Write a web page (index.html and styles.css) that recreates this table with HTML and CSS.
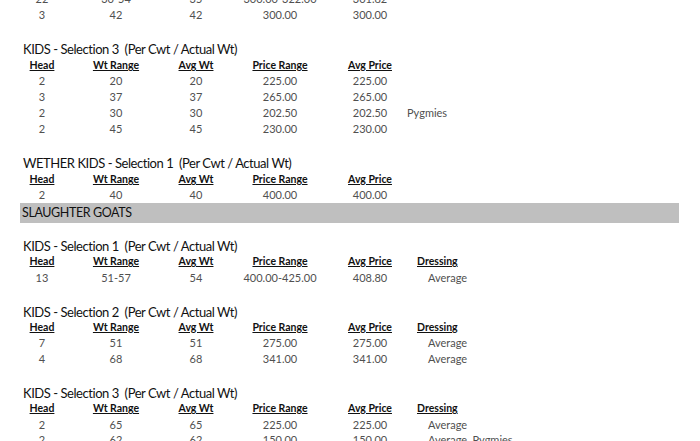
FILE: index.html
```html
<!DOCTYPE html>
<html>
<head>
<meta charset="utf-8">
<link rel="stylesheet" href="styles.css">
</head>
<body>
<div class="page">
  <div class="grid">
    <div class="c">22</div><div class="c">30-54</div><div class="c">35</div><div class="c">300.00-322.00</div><div class="c">301.82</div><div></div>
    <div class="c">3</div><div class="c">42</div><div class="c">42</div><div class="c">300.00</div><div class="c">300.00</div><div></div>
  </div>

  <section class="group">
    <h2 class="title">KIDS - Selection 3&nbsp; (Per Cwt / Actual Wt)</h2>
    <div class="grid">
      <div class="h">Head</div><div class="h">Wt Range</div><div class="h">Avg Wt</div><div class="h">Price Range</div><div class="h">Avg Price</div><div></div>
      <div class="c">2</div><div class="c">20</div><div class="c">20</div><div class="c">225.00</div><div class="c">225.00</div><div></div>
      <div class="c">3</div><div class="c">37</div><div class="c">37</div><div class="c">265.00</div><div class="c">265.00</div><div></div>
      <div class="c">2</div><div class="c">30</div><div class="c">30</div><div class="c">202.50</div><div class="c">202.50</div><div class="note">Pygmies</div>
      <div class="c">2</div><div class="c">45</div><div class="c">45</div><div class="c">230.00</div><div class="c">230.00</div><div></div>
    </div>
  </section>

  <section class="group">
    <h2 class="title">WETHER KIDS - Selection 1&nbsp; (Per Cwt / Actual Wt)</h2>
    <div class="grid">
      <div class="h">Head</div><div class="h">Wt Range</div><div class="h">Avg Wt</div><div class="h">Price Range</div><div class="h">Avg Price</div><div></div>
      <div class="c">2</div><div class="c">40</div><div class="c">40</div><div class="c">400.00</div><div class="c">400.00</div><div></div>
    </div>
  </section>

  <div class="bar">SLAUGHTER GOATS</div>

  <section class="group lower after-bar">
    <h2 class="title">KIDS - Selection 1&nbsp; (Per Cwt / Actual Wt)</h2>
    <div class="grid">
      <div class="h">Head</div><div class="h">Wt Range</div><div class="h">Avg Wt</div><div class="h">Price Range</div><div class="h">Avg Price</div><div class="h dress">Dressing</div>
      <div class="c">13</div><div class="c">51-57</div><div class="c">54</div><div class="c">400.00-425.00</div><div class="c">408.80</div><div class="dv">Average</div>
    </div>
  </section>

  <section class="group lower">
    <h2 class="title">KIDS - Selection 2&nbsp; (Per Cwt / Actual Wt)</h2>
    <div class="grid">
      <div class="h">Head</div><div class="h">Wt Range</div><div class="h">Avg Wt</div><div class="h">Price Range</div><div class="h">Avg Price</div><div class="h dress">Dressing</div>
      <div class="c">7</div><div class="c">51</div><div class="c">51</div><div class="c">275.00</div><div class="c">275.00</div><div class="dv">Average</div>
      <div class="c">4</div><div class="c">68</div><div class="c">68</div><div class="c">341.00</div><div class="c">341.00</div><div class="dv">Average</div>
    </div>
  </section>

  <section class="group lower">
    <h2 class="title">KIDS - Selection 3&nbsp; (Per Cwt / Actual Wt)</h2>
    <div class="grid">
      <div class="h">Head</div><div class="h">Wt Range</div><div class="h">Avg Wt</div><div class="h">Price Range</div><div class="h">Avg Price</div><div class="h dress">Dressing</div>
      <div class="c">2</div><div class="c">65</div><div class="c">65</div><div class="c">225.00</div><div class="c">225.00</div><div class="dv">Average</div>
      <div class="c">2</div><div class="c">62</div><div class="c">62</div><div class="c">150.00</div><div class="c">150.00</div><div class="dv">Average, Pygmies</div>
    </div>
  </section>
</div>
</body>
</html>
```

FILE: styles.css
```css
html, body {
  margin: 0;
  padding: 0;
  background: #ffffff;
  overflow: hidden;
}
body {
  font-family: Lato, "Open Sans", sans-serif;
  color: #111;
}
.page {
  width: 700px;
  height: 441px;
  overflow: hidden;
  padding: 0 21px 0 20px;
  box-sizing: border-box;
}
.page > .grid:first-child {
  margin-top: -9px;
}
.grid {
  display: grid;
  grid-template-columns: 44px 104px 56px 112px 68px 1fr;
  grid-auto-rows: 16px;
  line-height: 16px;
  font-size: 11px;
}
.lower .grid {
  grid-auto-rows: 15.6px;
  line-height: 15.6px;
}
.c {
  text-align: center;
  color: #505050;
  white-space: nowrap;
}
.h {
  text-align: center;
  font-weight: 700;
  text-decoration: underline;
  color: #111;
  font-size: 10.5px;
  white-space: nowrap;
}
.h.dress {
  text-align: left;
  padding-left: 13px;
}
.dv {
  color: #505050;
  padding-left: 24px;
  white-space: nowrap;
}
.note {
  color: #505050;
  padding-left: 3px;
}
.group {
  margin-top: 18px;
}
.group.lower {
  margin-top: 18.5px;
}
.group.after-bar {
  margin-top: 15px;
}
.title {
  margin: 0;
  padding-left: 3px;
  font-size: 13px;
  letter-spacing: -0.45px;
  font-weight: 400;
  line-height: 16px;
  color: #111;
  white-space: nowrap;
}
.bar {
  background: #bfbfbf;
  height: 20px;
  line-height: 20px;
  font-size: 12.5px;
  letter-spacing: -0.4px;
  padding-left: 2px;
  color: #111;
}
```
